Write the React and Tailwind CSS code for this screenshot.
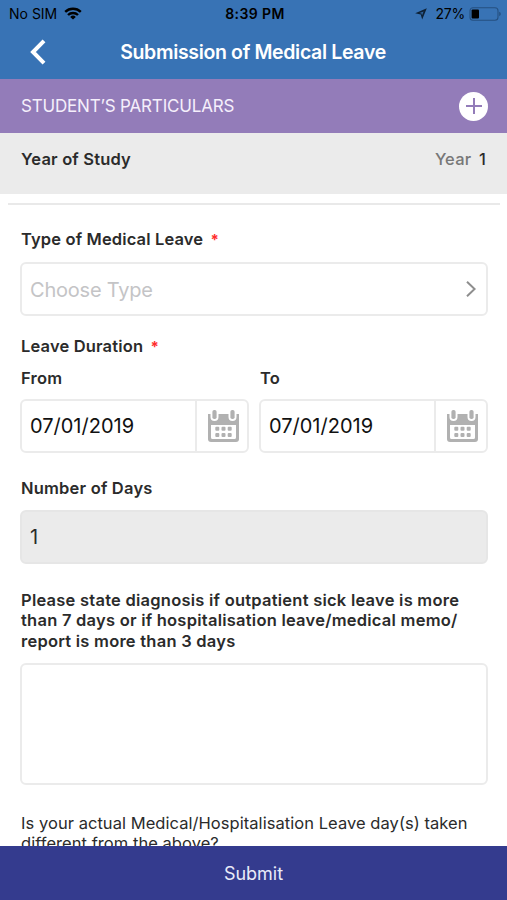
import React, { useState } from 'react';

const StatusBar = () => {
  return (
    <div className="h-7 flex items-center text-black text-[14px] leading-7">
      <div className="flex-1 flex items-center pl-[9px]">
        <span className="w-[49px] whitespace-nowrap">No SIM</span>
        <svg className="ml-[6px] mb-[2px] w-[18px] h-[13px]" viewBox="0 0 18 13" fill="none" stroke="currentColor" strokeWidth="2.4">
          <path d="M1.2 4.9a11.3 11.3 0 0 1 15.6 0" />
          <path d="M4 8a7.2 7.2 0 0 1 10 0" />
          <path d="M9 12.6 6.2 9.9a4 4 0 0 1 5.6 0z" fill="currentColor" stroke="none" />
        </svg>
      </div>
      <span className="font-semibold tracking-[0.4px]">8:39 PM</span>
      <div className="flex-1 flex items-center justify-end pr-[6px]">
        <svg className="w-3 h-3 mr-[8px] mb-px" viewBox="0 0 12 12">
          <path d="M11.8.2 7.2 11.6 5.7 6.4.2 5.2z" fill="#0e2135" />
          <path d="M8.6 3.4 7 7.6 6.5 5.5 4.4 5z" fill="#2f639e" />
        </svg>
        <span className="tracking-[-0.2px]">27%</span>
        <svg className="ml-1 mb-px w-[32px] h-[14px]" viewBox="0 0 32 14">
          <rect x="1" y=".8" width="28" height="12.4" rx="3" fill="none" stroke="#255080" strokeWidth="1.1" />
          <rect x="2.6" y="2.5" width="7.4" height="9" rx="1" fill="#000" />
          <path d="M30.2 4.8q1.6.6 1.6 2.2t-1.6 2.2z" fill="#255080" />
        </svg>
      </div>
    </div>
  );
};

const CalendarIcon = () => (
  <svg className="w-[31px] h-8" viewBox="0 0 31 32">
    <path d="M0 4h31v25a3 3 0 0 1-3 3H3a3 3 0 0 1-3-3z" fill="#b1b1b1" />
    <path d="M3 15h25v12.5a1.5 1.5 0 0 1-1.5 1.5h-22A1.5 1.5 0 0 1 3 27.5z" fill="#fff" />
    <path d="M2.5 0h8v7a4 4 0 0 1-8 0zM20.5 0h8v7a4 4 0 0 1-8 0z" fill="#fff" />
    <rect x="4.4" y="0" width="4.2" height="9" rx="1.8" fill="#b1b1b1" />
    <rect x="22.4" y="0" width="4.2" height="9" rx="1.8" fill="#b1b1b1" />
    <g fill="#b1b1b1">
      <rect x="7.3" y="16.8" width="4" height="4" rx="1" />
      <rect x="13.5" y="16.8" width="4" height="4" rx="1" />
      <rect x="19.7" y="16.8" width="4" height="4" rx="1" />
      <rect x="7.3" y="23" width="4" height="4" rx="1" />
      <rect x="13.5" y="23" width="4" height="4" rx="1" />
      <rect x="19.7" y="23" width="4" height="4" rx="1" />
    </g>
  </svg>
);

const DateField = ({ label, value }) => {
  return (
    <div className="flex-1">
      <p className="pl-px font-semibold leading-5 tracking-[0.2px]">{label}</p>
      <div className="mt-[11px] h-[54px] flex border-2 border-[#ebebeb] rounded-md">
        <div className="flex-1 flex items-center pl-2 text-[20px] text-[#111]">{value}</div>
        <div className="w-[52px] border-l-2 border-[#ebebeb] flex items-center justify-center pl-[2px]">
          <CalendarIcon />
        </div>
      </div>
    </div>
  );
};

const Required = () => <span className="text-[#ff2d2d] font-bold text-[15px] leading-none ml-[3px]">*</span>;

const App = () => {
  const [diagnosis, setDiagnosis] = useState('');

  return (
    <div className="w-[507px] h-[900px] flex flex-col overflow-hidden bg-white font-['Inter',sans-serif] text-[16.5px] text-[#2b2b2b]">
      <header className="h-[79px] shrink-0 bg-[#3873b5]">
        <StatusBar />
        <div className="h-12 grid grid-cols-[60px_1fr_60px] items-center">
          <button className="pl-[29px]" aria-label="Back">
            <svg className="w-[18px] h-[26px]" viewBox="0 0 18 26" fill="none" stroke="#fff" strokeWidth="4">
              <path d="M15 1.8 4 13l11 11.2" />
            </svg>
          </button>
          <h1 className="pt-px pr-px text-center text-white font-semibold text-[19.5px] tracking-[-0.34px] whitespace-nowrap">
            Submission of Medical Leave
          </h1>
        </div>
      </header>

      <div className="h-[54px] shrink-0 bg-[#937cb9] flex items-center justify-between pl-[21px] pr-[19px]">
        <h2 className="pt-px text-[#f5effb] text-[17px] tracking-[-0.18px]">STUDENT’S PARTICULARS</h2>
        <button className="w-[29px] h-[29px] rounded-full bg-white flex items-center justify-center" aria-label="Expand">
          <svg className="w-4 h-4" viewBox="0 0 16 16" stroke="#937cb9" strokeWidth="2">
            <path d="M8 0v16M0 8h16" />
          </svg>
        </button>
      </div>

      <div className="h-[61px] shrink-0 bg-[#ebebeb] flex justify-between pt-4 pl-[21px] pr-[21px] leading-5">
        <p className="font-semibold tracking-[0.18px]">Year of Study</p>
        <p className="font-medium text-[#777] tracking-[0.2px]">
          Year <span className="text-[#2b2b2b] ml-[3px]">1</span>
        </p>
      </div>

      <main className="flex-1 min-h-0 overflow-hidden">
        <div className="ml-2 mr-[7px] mt-[9px] h-[2px] bg-[#e9e9e9]" />
        <form className="pl-5 pr-[19px] pt-6">
          <p className="h-5 pl-px font-semibold leading-5 tracking-[0.14px]">
            Type of Medical Leave <Required />
          </p>
          <div className="mt-[13px] h-[54px] flex items-center justify-between border-2 border-[#ebebeb] rounded-md pl-2 pr-[10px]">
            <span className="pt-px text-[20px] tracking-[-0.22px] text-[#c4c4c6]">Choose Type</span>
            <svg className="w-[10px] h-4" viewBox="0 0 10 16" fill="none" stroke="#8e8e8e" strokeWidth="2">
              <path d="M1 .8 8.6 8 1 15.2" />
            </svg>
          </div>

          <p className="h-5 pl-px mt-5 font-semibold leading-5 tracking-[0.16px]">
            Leave Duration <Required />
          </p>
          <div className="mt-3 flex gap-[10px]">
            <DateField label="From" value="07/01/2019" />
            <DateField label="To" value="07/01/2019" />
          </div>

          <p className="pl-px mt-[25px] font-semibold leading-5 tracking-[0.2px]">Number of Days</p>
          <div className="mt-3 h-[54px] flex items-center bg-[#ebebeb] border-2 border-[#e6e6e6] rounded-md pl-2 text-[20px]">1</div>

          <p className="pl-px mt-[26px] font-semibold leading-[20.3px] tracking-[0.24px] whitespace-nowrap">
            Please state diagnosis if outpatient sick leave is more
            <br />
            than 7 days or if hospitalisation leave/medical memo/
            <br />
            report is more than 3 days
          </p>
          <textarea
            className="block mt-3 w-full h-[122px] resize-none border-2 border-[#ebebeb] rounded-md p-2 outline-none"
            value={diagnosis}
            onChange={(e) => setDiagnosis(e.target.value)}
          />

          <p className="pl-px mt-7 leading-5 tracking-[0.05px] whitespace-nowrap">
            Is your actual Medical/Hospitalisation Leave day(s) taken
            <br />
            different from the above?
          </p>
        </form>
      </main>

      <button className="h-[54px] shrink-0 bg-[#343b8e] text-[#e9ebf8] text-[18px]">Submit</button>
    </div>
  );
};

export default App;
